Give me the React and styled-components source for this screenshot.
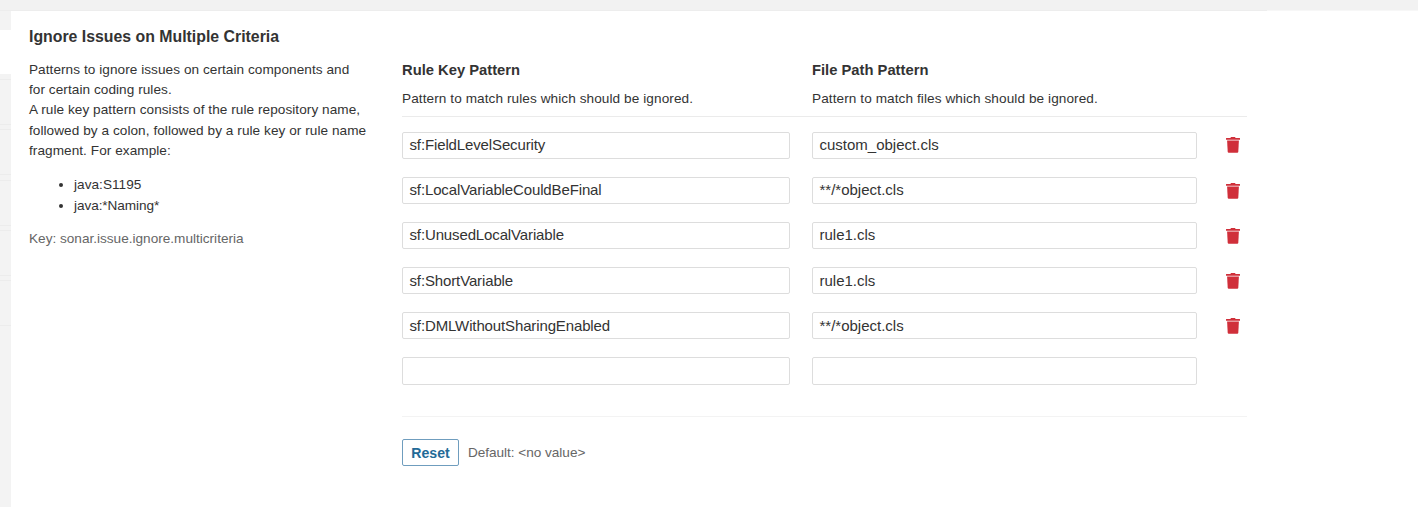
import React from "react";
import styled, { createGlobalStyle } from "styled-components";

const Global = createGlobalStyle`
  *, *::before, *::after { box-sizing: border-box; }
  body {
    margin: 0;
    background: #fff;
    color: #333;
    font-family: "Liberation Sans", Arial, sans-serif;
    font-size: 13.6px;
    line-height: 20.25px;
  }
`;

const Page = styled.div`
  height: 507px;
  overflow: hidden;
  display: flex;
  flex-direction: column;
`;

const TopStrip = styled.div`
  flex: none;
  height: 10px;
  background: #f2f2f2;
`;

const TopBorder = styled.div`
  flex: none;
  height: 1px;
  background: linear-gradient(to right, #ededed 1267px, #f7f7f7 1267px);
`;

const Main = styled.div`
  flex: 1;
  display: flex;
  min-height: 0;
`;

const Nav = styled.div`
  flex: none;
  width: 11px;
  padding-top: 19px;
  background: #f3f3f3;
`;

const NavItem = styled.div`
  height: 46px;
  margin-bottom: 4.3px;
  border: solid #ececec;
  border-width: 1px 0;
`;

const ActiveNavItem = styled(NavItem)`
  height: 44px;
  margin-bottom: 5px;
  border: 0;
  background: #fff;
`;

const Setting = styled.section`
  display: flex;
  padding: 16px 0 0 18px;
`;

const Info = styled.div`
  width: 373px;
`;

const Title = styled.h3`
  margin: 0 0 12.9px;
  font-size: 15.85px;
  line-height: 20px;
  font-weight: 700;
`;

const Text = styled.span`
  display: ${(p) => (p.$block ? "block" : "inline")};
  white-space: nowrap;
  letter-spacing: ${(p) => p.$spacing || 0}px;
`;

const Examples = styled.ul`
  margin: 13.6px 0 12.8px;
  padding-left: 45px;
  line-height: 20.9px;
`;

const Key = styled.div`
  color: #666;
`;

const Editor = styled.div`
  width: 845px;
  padding-top: 32px;
`;

const Row = styled.div`
  display: grid;
  grid-template-columns: 388px 385px 28px;
  column-gap: 22px;
  align-items: center;
`;

const Header = styled(Row)`
  height: 58px;
  padding-top: 1px;
  align-items: start;
  border-bottom: 1px solid #ebebeb;
`;

const ColumnTitle = styled.h4`
  margin: 0 0 9px;
  font-size: 14.75px;
  line-height: 20px;
  font-weight: 700;
`;

const Rows = styled.div`
  display: flex;
  flex-direction: column;
  gap: 17.95px;
  padding: 14.8px 0 31.2px;
  border-bottom: 1px solid #f3f3f3;
`;

const Input = styled.div`
  height: 27.2px;
  padding: 0.4px 6.5px 0;
  border: 1px solid #ddd;
  border-radius: 2px;
  font-size: 15px;
  line-height: 24px;
`;

const Trash = styled.svg`
  display: block;
  width: 15px;
  height: 16px;
  margin-left: 6.6px;
  fill: #d02f3a;
`;

const Footer = styled.div`
  display: flex;
  align-items: center;
  gap: 9px;
  padding-top: 22px;
  color: #666;
`;

const DefaultValue = styled.div`
  padding-top: 1px;
  letter-spacing: -0.03px;
`;

const ResetButton = styled.button`
  width: 57px;
  height: 27px;
  padding: 1px 0 0;
  border: 1px solid #6f9dbe;
  border-radius: 2px;
  background: #fff;
  color: #236a97;
  font: 700 14.1px/24px "Liberation Sans", Arial, sans-serif;
`;

const description = [
  "Patterns to ignore issues on certain components and",
  "for certain coding rules.",
  "A rule key pattern consists of the rule repository name,",
  "followed by a colon, followed by a rule key or rule name",
  "fragment. For example:",
];

const values = [
  ["sf:FieldLevelSecurity", "custom_object.cls"],
  ["sf:LocalVariableCouldBeFinal", "**/*object.cls"],
  ["sf:UnusedLocalVariable", "rule1.cls"],
  ["sf:ShortVariable", "rule1.cls"],
  ["sf:DMLWithoutSharingEnabled", "**/*object.cls"],
  ["", ""],
];

function TrashIcon() {
  return (
    <Trash viewBox="0 0 15 16">
      <path d="M0 1.3Q0 .9.4.9H4.4L5 0H9L9.6.9H13.6Q14 .9 14 1.3V2.7H0z" />
      <path d="M1.1 3.5H12.9L12.3 14.8Q12.2 15.7 11.3 15.7H2.7Q1.8 15.7 1.7 14.8z" />
    </Trash>
  );
}

export default function App() {
  return (
    <Page>
      <Global />
      <TopStrip />
      <TopBorder />
      <Main>
        <Nav>
          <ActiveNavItem />
          {[0, 1, 2, 3, 4].map((i) => <NavItem key={i} />)}
        </Nav>
        <Setting>
          <Info>
            <Title>Ignore Issues on Multiple Criteria</Title>
            {description.map((line) => (
              <Text $block $spacing={0.058} key={line}>{line}</Text>
            ))}
            <Examples>
              <li><Text $spacing={0.04}>java:S1195</Text></li>
              <li><Text $spacing={-0.07}>java:*Naming*</Text></li>
            </Examples>
            <Key>Key: sonar.issue.ignore.multicriteria</Key>
          </Info>
          <Editor>
            <Header>
              <div>
                <ColumnTitle>Rule Key Pattern</ColumnTitle>
                <Text $block $spacing={0.083}>Pattern to match rules which should be ignored.</Text>
              </div>
              <div>
                <ColumnTitle>File Path Pattern</ColumnTitle>
                <Text $block $spacing={0.085}>Pattern to match files which should be ignored.</Text>
              </div>
            </Header>
            <Rows>
              {values.map(([rule, file], i) => (
                <Row key={i}>
                  <Input><Text $spacing={-0.13}>{rule}</Text></Input>
                  <Input><Text>{file}</Text></Input>
                  {rule && <TrashIcon />}
                </Row>
              ))}
            </Rows>
            <Footer>
              <ResetButton>Reset</ResetButton>
              <DefaultValue>Default: &lt;no value&gt;</DefaultValue>
            </Footer>
          </Editor>
        </Setting>
      </Main>
    </Page>
  );
}
